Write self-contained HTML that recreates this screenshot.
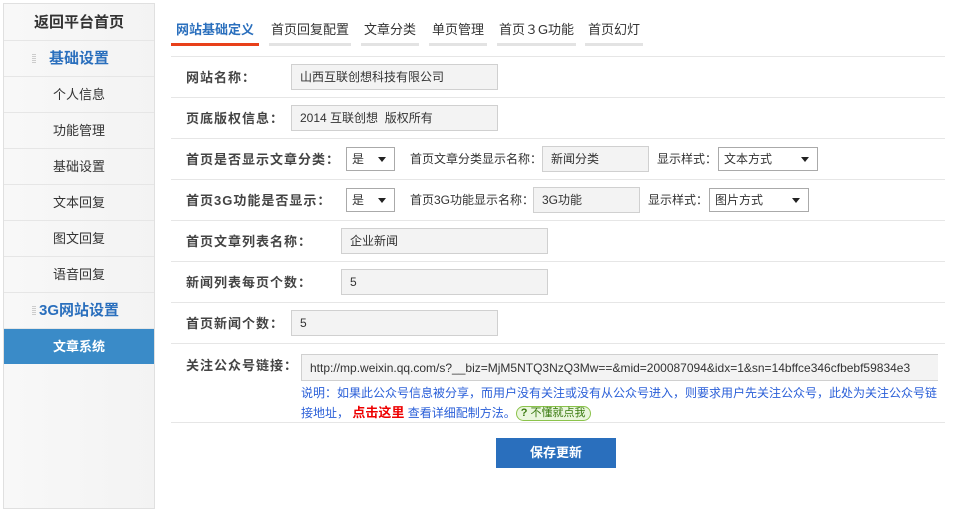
<!DOCTYPE html>
<html><head><meta charset="utf-8"><style>
*{margin:0;padding:0;box-sizing:border-box}
body{width:966px;height:509px;background:#fff;font-family:"Liberation Sans","Noto Sans CJK SC",sans-serif;font-size:12px;color:#333;position:relative;overflow:hidden}
.a{position:absolute}
#side{left:3px;top:3px;width:152px;height:506px;border:1px solid #e0e0e0;background:linear-gradient(90deg,#f8f8f8,#f3f3f3)}
.si{position:absolute;left:0;width:150px;height:36px;line-height:36px;text-align:center;border-bottom:1px solid #e6e6e6;font-size:13px;color:#333}
.h{font-size:15px;font-weight:bold;color:#2a6fbd}
.dots{position:absolute;left:28px;top:13px;width:4px;height:10px;background:repeating-linear-gradient(#ccc 0 1px,transparent 1px 2px)}
.tab{position:absolute;top:17px;height:29px;line-height:26px;text-align:center;font-size:13px;color:#333;border-bottom:3px solid #e3e3e3}
.sep{position:absolute;left:171px;width:774px;height:1px;background:#e6e6e6}
.lb{position:absolute;left:186px;font-weight:bold;font-size:13px;color:#444;letter-spacing:1px}
.in{position:absolute;height:26px;border:1px solid #d0d0d0;background:#f3f3f3;line-height:24px;padding-left:8px;font-size:12px;color:#333;overflow:hidden;white-space:nowrap}
.sel{position:absolute;height:24px;border:1px solid #aaa;background:#fff;line-height:22px;padding-left:5px;font-size:12px}
.sel:after{content:"";position:absolute;right:8px;top:9px;border:4px solid transparent;border-top:5px solid #222;border-bottom:0}
.t{position:absolute;font-size:12px;color:#333}
</style></head><body>
<div id="side" class="a">
<div class="si" style="top:0;height:37px;line-height:37px;font-size:15px;font-weight:bold;color:#333">返回平台首页</div>
<div class="si h" style="top:37px"><span class="dots"></span>基础设置</div>
<div class="si" style="top:73px">个人信息</div>
<div class="si" style="top:109px">功能管理</div>
<div class="si" style="top:145px">基础设置</div>
<div class="si" style="top:181px">文本回复</div>
<div class="si" style="top:217px">图文回复</div>
<div class="si" style="top:253px">语音回复</div>
<div class="si h" style="top:289px"><span class="dots"></span>3G网站设置</div>
<div class="si" style="top:325px;height:35px;line-height:35px;background:#3a8bc8;color:#fff;font-weight:bold;font-size:13px;border:0">文章系统</div>
</div>

<div class="tab" style="left:171px;width:88px;border-color:#e8401a;color:#2a6fbd;font-weight:bold">网站基础定义</div>
<div class="tab" style="left:269px;width:82px">首页回复配置</div>
<div class="tab" style="left:361px;width:58px">文章分类</div>
<div class="tab" style="left:429px;width:58px">单页管理</div>
<div class="tab" style="left:497px;width:79px">首页３G功能</div>
<div class="tab" style="left:585px;width:58px">首页幻灯</div>

<div class="sep" style="top:56px"></div>
<div class="sep" style="top:97px"></div>
<div class="sep" style="top:138px"></div>
<div class="sep" style="top:179px"></div>
<div class="sep" style="top:220px"></div>
<div class="sep" style="top:261px"></div>
<div class="sep" style="top:302px"></div>
<div class="sep" style="top:343px"></div>
<div class="sep" style="top:422px"></div>

<div class="lb" style="top:67px">网站名称：</div>
<div class="in" style="left:291px;top:64px;width:207px">山西互联创想科技有限公司</div>

<div class="lb" style="top:108px">页底版权信息：</div>
<div class="in" style="left:291px;top:105px;width:207px">2014 互联创想 &nbsp;版权所有</div>

<div class="lb" style="top:149px">首页是否显示文章分类：</div>
<div class="sel" style="left:346px;top:147px;width:49px">是</div>
<div class="t" style="left:410px;top:150px">首页文章分类显示名称：</div>
<div class="in" style="left:542px;top:146px;width:107px">新闻分类</div>
<div class="t" style="left:657px;top:150px">显示样式：</div>
<div class="sel" style="left:718px;top:147px;width:100px">文本方式</div>

<div class="lb" style="top:190px">首页3G功能是否显示：</div>
<div class="sel" style="left:346px;top:188px;width:49px">是</div>
<div class="t" style="left:410px;top:191px">首页3G功能显示名称：</div>
<div class="in" style="left:533px;top:187px;width:107px">3G功能</div>
<div class="t" style="left:648px;top:191px">显示样式：</div>
<div class="sel" style="left:709px;top:188px;width:100px">图片方式</div>

<div class="lb" style="top:231px">首页文章列表名称：</div>
<div class="in" style="left:341px;top:228px;width:207px">企业新闻</div>

<div class="lb" style="top:272px">新闻列表每页个数：</div>
<div class="in" style="left:341px;top:269px;width:207px">5</div>

<div class="lb" style="top:313px">首页新闻个数：</div>
<div class="in" style="left:291px;top:310px;width:207px">5</div>

<div class="lb" style="top:355px">关注公众号链接：</div>
<div class="in" style="left:301px;top:354px;width:637px;height:27px;line-height:27px;border-right:0">http://mp.weixin.qq.com/s?__biz=MjM5NTQ3NzQ3Mw==&amp;mid=200087094&amp;idx=1&amp;sn=14bffce346cfbebf59834e3</div>
<div class="t" style="left:301px;top:384px;color:#2a5fd8;width:640px;line-height:19px;white-space:nowrap">说明：如果此公众号信息被分享，而用户没有关注或没有从公众号进入，则要求用户先关注公众号，此处为关注公众号链<br>接地址， <b style="color:#e00;font-size:13px">点击这里</b> 查看详细配制方法。<span style="display:inline-block;border:1px solid #8bc34a;border-radius:8px;background:#eaf6dd;color:#3a7a10;font-size:11px;line-height:13px;padding:0 4px;vertical-align:1px"><b>?</b> 不懂就点我</span></div>

<div class="a" style="left:496px;top:438px;width:120px;height:30px;background:#2a6fbd;color:#fff;font-weight:bold;font-size:13px;text-align:center;line-height:30px">保存更新</div>
</body></html>
